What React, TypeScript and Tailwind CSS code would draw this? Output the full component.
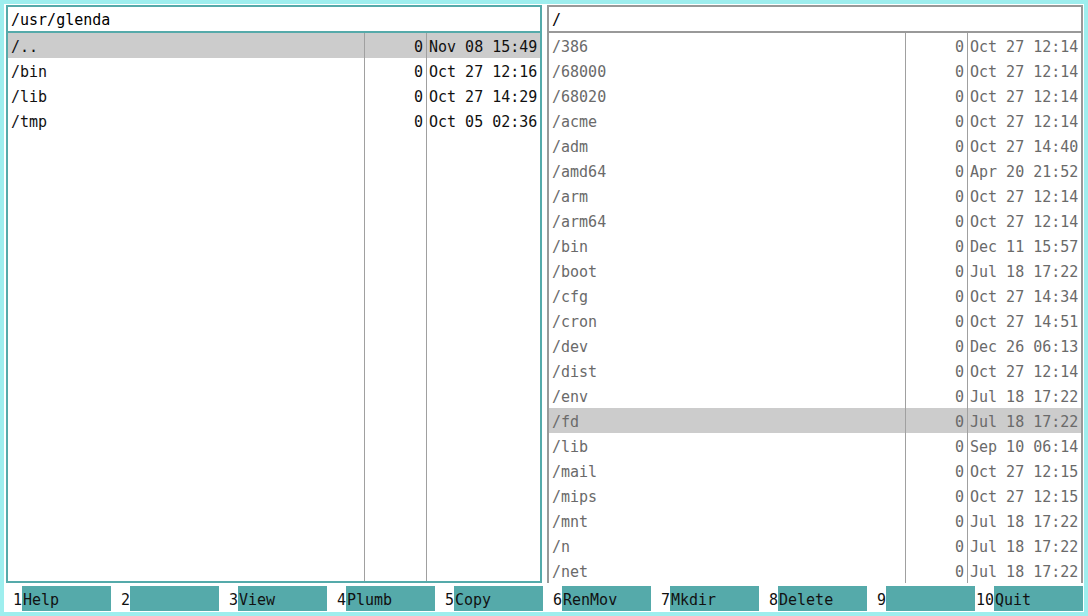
type Entry = { name: string; size: string; date: string };

const left: Entry[] = [
  { name: "/..", size: "0", date: "Nov 08 15:49" },
  { name: "/bin", size: "0", date: "Oct 27 12:16" },
  { name: "/lib", size: "0", date: "Oct 27 14:29" },
  { name: "/tmp", size: "0", date: "Oct 05 02:36" },
];

const right: Entry[] = [
  ["/386", "Oct 27 12:14"],
  ["/68000", "Oct 27 12:14"],
  ["/68020", "Oct 27 12:14"],
  ["/acme", "Oct 27 12:14"],
  ["/adm", "Oct 27 14:40"],
  ["/amd64", "Apr 20 21:52"],
  ["/arm", "Oct 27 12:14"],
  ["/arm64", "Oct 27 12:14"],
  ["/bin", "Dec 11 15:57"],
  ["/boot", "Jul 18 17:22"],
  ["/cfg", "Oct 27 14:34"],
  ["/cron", "Oct 27 14:51"],
  ["/dev", "Dec 26 06:13"],
  ["/dist", "Oct 27 12:14"],
  ["/env", "Jul 18 17:22"],
  ["/fd", "Jul 18 17:22"],
  ["/lib", "Sep 10 06:14"],
  ["/mail", "Oct 27 12:15"],
  ["/mips", "Oct 27 12:15"],
  ["/mnt", "Jul 18 17:22"],
  ["/n", "Jul 18 17:22"],
  ["/net", "Jul 18 17:22"],
].map(([name, date]) => ({ name, size: "0", date }));

const keys = ["Help", "", "View", "Plumb", "Copy", "RenMov", "Mkdir", "Delete", "", "Quit"];

function Panel({
  path,
  entries,
  selected,
  active,
}: {
  path: string;
  entries: Entry[];
  selected: number;
  active: boolean;
}) {
  const rowCls = (i: number) =>
    "h-[25px] pt-[3px] leading-[22px] whitespace-nowrap " +
    (i === selected ? "bg-[#cccccc]" : "");

  return (
    <div
      className={
        "flex flex-col w-[536px] h-full overflow-hidden " +
        (active
          ? "border-2 border-[#55aaaa]"
          : "border-t-2 border-l-2 border-r-2 border-[#999999]")
      }
    >
      <div
        className={
          "h-[26px] shrink-0 pl-[3px] pt-[3px] leading-[21px] text-black border-b-2 " +
          (active ? "border-[#55aaaa]" : "border-[#999999]")
        }
      >
        {path}
      </div>
      <div className={"flex flex-1 overflow-hidden " + (active ? "text-[#111111]" : "text-[#6a6a6a]")}>
        <div className="w-[357px] shrink-0 border-r border-[#a0a0a0]">
          {entries.map((e, i) => (
            <div key={i} className={rowCls(i) + " pl-[3px]"}>
              {e.name}
            </div>
          ))}
        </div>
        <div className="w-[62px] shrink-0 border-r border-[#a0a0a0]">
          {entries.map((e, i) => (
            <div key={i} className={rowCls(i) + " pr-[3px] text-right"}>
              {e.size}
            </div>
          ))}
        </div>
        <div className="flex-1 overflow-hidden">
          {entries.map((e, i) => (
            <div key={i} className={rowCls(i) + " pl-[2px]"}>
              {e.date}
            </div>
          ))}
        </div>
      </div>
    </div>
  );
}

export default function App() {
  return (
    <div
      className="w-[1088px] h-[616px] bg-[#9eeeee] p-[4px] text-[15px]"
      style={{ fontFamily: '"DejaVu Sans Mono", "Liberation Mono", monospace' }}
    >
      <div className="flex flex-col h-full bg-white">
        <div className="flex gap-[5px] pt-[1px] pl-[2px] pr-[1px] h-[579px]">
          <Panel path="/usr/glenda" entries={left} selected={0} active />
          <Panel path="/" entries={right} selected={15} active={false} />
        </div>
        <div className="grid grid-cols-10 pt-[3px]">
          {keys.map((k, i) => (
            <div key={i} className="flex h-[25px] text-[#111111]">
              <span className="w-[18px] pt-[3px] leading-[22px] text-right">{i + 1}</span>
              <span className="w-[89px] pt-[3px] leading-[22px] bg-[#55aaaa] pl-[1px] whitespace-nowrap">
                {k}
              </span>
            </div>
          ))}
        </div>
      </div>
    </div>
  );
}
